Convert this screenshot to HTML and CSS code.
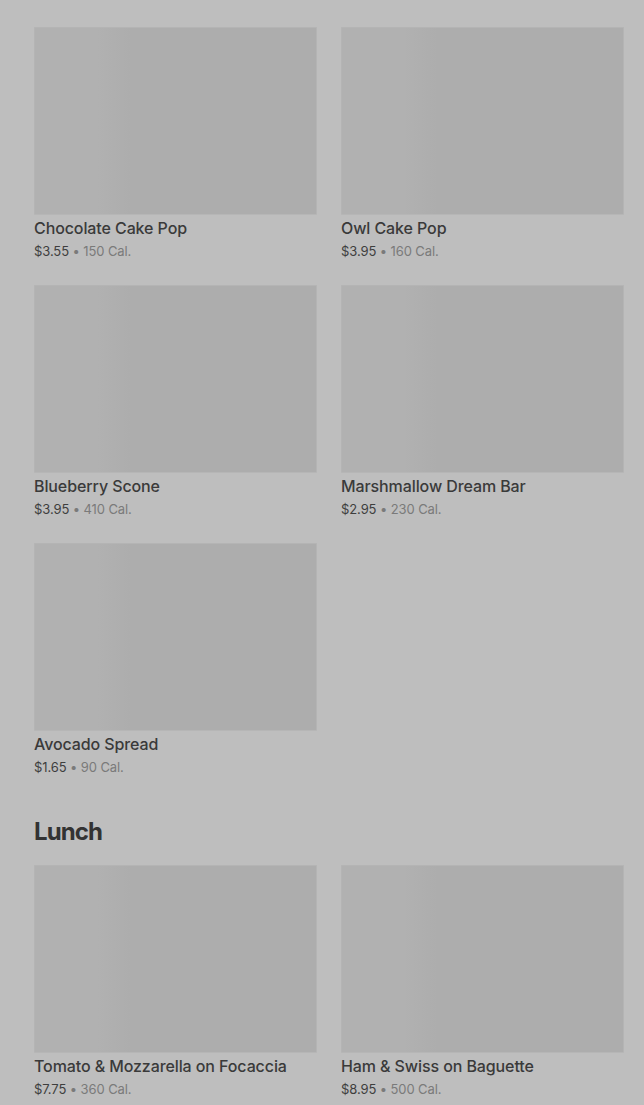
FILE: index.html
```html
<!DOCTYPE html>
<html lang="en">
<head>
    <meta charset="UTF-8">
    <meta name="viewport" content="width=device-width, initial-scale=1.0">
    <title>Menu</title>
    <link rel="stylesheet" href="styles.css">
</head>
<body>
    <main class="menu">
        <section class="menu-section">
            <div class="item-grid">
                <div class="item">
                    <div class="item-image"></div>
                    <div class="item-name">Butter Croissant</div>
                    <div class="item-meta"><span class="price">$3.45</span> • <span class="cal">260 Cal.</span></div>
                </div>
                <div class="item">
                    <div class="item-image"></div>
                    <div class="item-name">Cheese Danish</div>
                    <div class="item-meta"><span class="price">$3.75</span> • <span class="cal">290 Cal.</span></div>
                </div>
                <div class="item">
                    <div class="item-image"></div>
                    <div class="item-name">Chocolate Cake Pop</div>
                    <div class="item-meta"><span class="price">$3.55</span> • <span class="cal">150 Cal.</span></div>
                </div>
                <div class="item">
                    <div class="item-image"></div>
                    <div class="item-name">Owl Cake Pop</div>
                    <div class="item-meta"><span class="price">$3.95</span> • <span class="cal">160 Cal.</span></div>
                </div>
                <div class="item">
                    <div class="item-image"></div>
                    <div class="item-name">Blueberry Scone</div>
                    <div class="item-meta"><span class="price">$3.95</span> • <span class="cal">410 Cal.</span></div>
                </div>
                <div class="item">
                    <div class="item-image"></div>
                    <div class="item-name">Marshmallow Dream Bar</div>
                    <div class="item-meta"><span class="price">$2.95</span> • <span class="cal">230 Cal.</span></div>
                </div>
                <div class="item">
                    <div class="item-image"></div>
                    <div class="item-name">Avocado Spread</div>
                    <div class="item-meta"><span class="price">$1.65</span> • <span class="cal">90 Cal.</span></div>
                </div>
            </div>
        </section>

        <section class="menu-section">
            <h2>Lunch</h2>
            <div class="item-grid">
                <div class="item">
                    <div class="item-image"></div>
                    <div class="item-name">Tomato &amp; Mozzarella on Focaccia</div>
                    <div class="item-meta"><span class="price">$7.75</span> • <span class="cal">360 Cal.</span></div>
                </div>
                <div class="item">
                    <div class="item-image"></div>
                    <div class="item-name">Ham &amp; Swiss on Baguette</div>
                    <div class="item-meta"><span class="price">$8.95</span> • <span class="cal">500 Cal.</span></div>
                </div>
                <div class="item">
                    <div class="item-image"></div>
                    <div class="item-name">Turkey &amp; Havarti Sandwich</div>
                    <div class="item-meta"><span class="price">$8.45</span> • <span class="cal">480 Cal.</span></div>
                </div>
                <div class="item">
                    <div class="item-image"></div>
                    <div class="item-name">Chicken &amp; Quinoa Bowl</div>
                    <div class="item-meta"><span class="price">$9.25</span> • <span class="cal">420 Cal.</span></div>
                </div>
            </div>
        </section>
    </main>
</body>
</html>
```

FILE: styles.css
```css
html, body {
    margin: 0;
    padding: 0;
    background-color: #bebebe;
    overflow: hidden;
}
body {
    font-family: Inter, 'Noto Sans', sans-serif;
    color: #383838;
}
.menu {
    margin-top: -231px;
    padding: 0 20px 0 34px;
}
.menu-section {
    margin-bottom: 39px;
}
.menu-section h2 {
    margin: 0 0 17px 0;
    font-size: 24px;
    line-height: 32px;
    font-weight: 700;
    color: #333;
    letter-spacing: -0.9px;
}
.item-grid {
    display: grid;
    grid-template-columns: 283px 283px;
    column-gap: 24px;
    row-gap: 24px;
}
.item-image {
    height: 186px;
    border: 1px solid #b4b4b4;
    border-bottom-color: #b6b6b6;
    border-radius: 1px;
    background: linear-gradient(90deg, #b1b1b1 0%, #b1b1b1 22%, #adadad 34%, #adadad 100%);
}
.item-name {
    margin-top: 2px;
    font-size: 16px;
    line-height: 22px;
    font-weight: 500;
    color: #3a3a3a;
    letter-spacing: -0.1px;
}
.item-meta {
    margin-top: 2px;
    font-size: 13px;
    line-height: 20px;
    color: #7a7a7a;
    letter-spacing: -0.1px;
}
.item-meta .price {
    color: #3e3e3e;
}
.item-meta .cal {
    color: #7a7a7a;
}
```
